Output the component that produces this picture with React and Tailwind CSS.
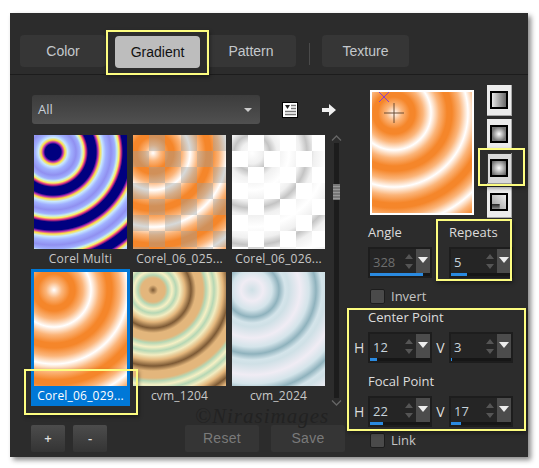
const orangeStops = "#fff_0,#fbb57a_8px,#f5862a_16px,#f5862a_21px,#fbb57a_29px,#fff_37px";

const thumbs = [
  { name: "Corel Multi", fill: "[background:repeating-radial-gradient(circle_at_19px_17px,#000080_8px,#c030b0_10px,#ffe040_12px,#c8e8ff_14.5px,#a0b0ff_18px,#9090f0_23px,#a0b0ff_27px,#c8f0e8_29px,#ffef60_31px,#e03080_33px,#000080_35px,#000080_43px)]" },
  { name: "Corel_06_025...", fill: "[background:conic-gradient(#9aa0a066_25%,transparent_0_50%,#9aa0a066_0_75%,transparent_0)_0_0/32px_32px,repeating-radial-gradient(circle_at_20px_18px,#fff_0,#fbb57a_8px,#f5862a_16px,#f5862a_21px,#fbb57a_29px,#fff_37px)]" },
  { name: "Corel_06_026...", fill: "[background:conic-gradient(#fff_25%,transparent_0_50%,#fff_0_75%,transparent_0)_0_0/32px_32px,repeating-radial-gradient(circle_at_20px_18px,#fff_0,#f0f0f0_11px,#c4c4c4_18px,#f0f0f0_25px,#fff_37px)]" },
  { name: "Corel_06_029...", selected: true, fill: "[background:repeating-radial-gradient(circle_at_20px_18px,#fff_0,#fbb57a_8px,#f5862a_16px,#f5862a_21px,#fbb57a_29px,#fff_37px)]" },
  { name: "cvm_1204", fill: "[background:repeating-radial-gradient(circle_at_20px_18px,#7d5a35_0,#e3b67c_5px,#e3b67c_12px,#b6d7b4_15px,#f6f0c4_19px,#b6d7b4_23px,#f2ecc0_27px,#e3b67c_32px,#7d5a35_38px)]" },
  { name: "cvm_2024", fill: "[background:repeating-radial-gradient(circle_at_20px_18px,#cfe0e6_0,#f0ecf4_11px,#d4e4ea_20px,#8fb2bd_27px,#d4e4ea_33px,#cfe0e6_37px)]" },
];

const shapes = [
  "[background:linear-gradient(to_right,#e8e8e8,#666)]",
  "[background:radial-gradient(closest-side,#fff,#777)]",
  "[background:radial-gradient(circle,#fff,#555)]",
  "[background:linear-gradient(#222,#888)_0_100%/55%_35%_no-repeat,linear-gradient(45deg,#999,#eee)]",
];

function Yellow({ className }) {
  return <div className={`pointer-events-none absolute border-2 border-[#fdfd80] shadow-[1px_2px_4px_#0006] ${className}`} />;
}

function Tab({ label, active, className }) {
  return (
    <div className={`flex h-[32px] items-center justify-center rounded text-[14px] ${active ? "bg-[#bdbdbd] text-[#111]" : "bg-[#363636] text-[#c4c8cc]"} ${className}`}>
      {label}
    </div>
  );
}

function Thumb({ item }) {
  return (
    <div className={`h-[137px] w-[99px] p-[3px] pb-0 ${item.selected ? "bg-[#0078d7]" : ""}`}>
      <div className={`h-[114px] w-[93px] ${item.fill}`} />
      <p className={`flex h-[20px] items-center justify-center text-[12px] tracking-[0.2px] ${item.selected ? "text-white" : "text-[#c8c8c8]"}`}>{item.name}</p>
    </div>
  );
}

function Spin({ value, pct, disabled }) {
  return (
    <div className="flex h-[31px] w-[64px] flex-col border-2 border-[#1d1d1d] bg-[#252525]">
      <div className="flex min-h-0 flex-1">
        <span className={`flex-1 pl-[3px] text-[13px] leading-[26px] ${disabled ? "text-[#6e6e6e]" : "text-[#c8d4dc]"}`}>{value}</span>
        <svg width="14" height="26" viewBox="0 0 14 26" className="shrink-0">
          <path d="M3 10 L7 5 L11 10Z M3 15 L11 15 L7 20Z" fill="#555" />
        </svg>
        <div className="flex w-[14px] shrink-0 justify-center bg-[#4c4c4c] pt-[8px]">
          <svg width="10" height="6" viewBox="0 0 10 6"><path d="M0 0H10L5 6Z" fill="#eee" /></svg>
        </div>
      </div>
      <div className="h-[3px] bg-[#161616]">
        <div className="h-full bg-[#2a8ae0]" style={{ width: `${pct}%` }} />
      </div>
    </div>
  );
}

function Check({ label }) {
  return (
    <div className="flex items-center gap-[6px] text-[13px] text-[#c4c4c4]">
      <div className="h-[15px] w-[15px] rounded-[2px] border border-[#1d1d1d] bg-[#4a4a4a]" />
      {label}
    </div>
  );
}

function SpinRow({ h, v }) {
  return (
    <div className="flex items-center text-[14px] text-[#dcdcdc]">
      <span className="w-[14px]">H</span>
      <Spin {...h} />
      <span className="w-[17px] text-center">V</span>
      <Spin {...v} />
    </div>
  );
}

export default function App() {
  return (
    <div className="h-[468px] w-[539px] overflow-hidden bg-white pl-[10px] pt-[13px] font-['Open_Sans','Noto_Sans',sans-serif]">
      <div className="relative h-[444px] w-[518px] bg-[#2c2c2c] shadow-[3px_3px_5px_#0007]">
        <div className="flex h-[62px] items-start border-b border-[#1c1c1c] pl-[10px] pt-[22px] font-['Liberation_Sans',sans-serif]">
          <Tab label="Color" className="w-[86px]" />
          <Tab label="Gradient" active className="ml-[9px] mt-px h-[30px] w-[85px]" />
          <Tab label="Pattern" className="ml-[6px] w-[90px]" />
          <div className="ml-[13px] mt-[-1px] h-[22px] w-px self-center bg-[#4a4a4a]" />
          <Tab label="Texture" className="ml-[12px] w-[87px]" />
        </div>

        <div className="flex pl-[21px]">
          <div className="w-[315px]">
            <div className="mt-[20px] flex h-[29px] items-center">
              <div className="ml-px flex h-[29px] w-[228px] items-center justify-between rounded-[3px] bg-[linear-gradient(#3c3c3c,#505050)] pl-[6px] pr-[8px] text-[13px] text-[#c8d0d8]">
                All
                <svg width="8" height="4" viewBox="0 0 8 4"><path d="M0 0H8L4 4Z" fill="#ccc" /></svg>
              </div>
              <svg width="16" height="16" viewBox="0 0 16 16" className="ml-[22px]">
                <rect x="0.5" y="0.5" width="15" height="15" fill="#fff" stroke="#000" />
                <path d="M3 3H8L5.5 7Z" fill="#222" />
                <path d="M9 3.5H14M9 6.5H14M3 9.5H14M3 12.5H14" stroke="#777" strokeWidth="1.5" />
              </svg>
              <svg width="14" height="12" viewBox="0 0 14 12" className="ml-[24px]">
                <path d="M0 4H7V0L14 6L7 12V8H0Z" fill="#f0f0f0" />
              </svg>
            </div>

            <div className="mt-[8px] flex">
              <div className="grid w-[297px] grid-cols-3">
                {thumbs.map((item) => <Thumb key={item.name} item={item} />)}
              </div>
              <div className="ml-px flex h-[274px] w-[15px] flex-col items-center justify-between pt-[3px]">
                <svg width="11" height="6" viewBox="0 0 11 6"><path d="M1 5.5L5.5 1L10 5.5" fill="none" stroke="#666" strokeWidth="1.3" /></svg>
                <div className="my-[2px] w-[5px] flex-1 bg-[#1c1c1c] pt-[41px]">
                  <div className="-ml-px h-[16px] w-[7px] bg-[repeating-linear-gradient(#777_0,#777_2px,#999_2px,#999_3px)]" />
                </div>
                <svg width="11" height="6" viewBox="0 0 11 6"><path d="M1 0.5L5.5 5L10 0.5" fill="none" stroke="#666" strokeWidth="1.3" /></svg>
              </div>
            </div>

            <div className="mt-[19px] flex gap-[8px] text-[13px]">
              <div className="flex h-[27px] w-[34px] items-center justify-center rounded-[2px] bg-[linear-gradient(#4c4c4c,#343434)] font-semibold text-[#e0e0e0]">+</div>
              <div className="flex h-[27px] w-[34px] items-center justify-center rounded-[2px] bg-[linear-gradient(#4c4c4c,#343434)] font-semibold text-[#e0e0e0]">-</div>
              <div className="ml-[70px] flex h-[27px] w-[74px] items-center justify-center rounded-[2px] bg-[#353535] font-['Liberation_Sans',sans-serif] text-[14px] tracking-[0.3px] text-[#7a7a7a]">Reset</div>
              <div className="ml-[4px] flex h-[27px] w-[74px] items-center justify-center rounded-[2px] bg-[#353535] font-['Liberation_Sans',sans-serif] text-[14px] tracking-[0.3px] text-[#7a7a7a]">Save</div>
            </div>
          </div>

          <div className="ml-[8px] w-[165px]">
            <div className="mt-[10px] flex h-[134px] pl-[16px]">
              <div className="relative mt-[5px] h-[125px] w-[104px] border-2 border-white [background:repeating-radial-gradient(circle_at_22px_21px,#fff_0,#fbb57a_8px,#f5862a_16px,#f5862a_21px,#fbb57a_29px,#fff_37px)]">
                <svg width="34" height="34" viewBox="0 0 34 34" className="absolute left-[1px] top-[0px]">
                  <path d="M6 0L16 10M16 0L6 10" stroke="#8a3fd0" strokeWidth="1" />
                  <path d="M21 11V31M11 21H31" stroke="#6a4a30" strokeWidth="1" />
                </svg>
              </div>
              <div className="ml-[13px] flex flex-col gap-[3px]">
                {shapes.map((shape, i) => (
                  <div key={shape} className={`flex h-[31px] w-[25px] items-center justify-center border-b border-r ${i === 2 ? "border-[#999] bg-[#d8d8d8] shadow-[inset_1px_1px_0_#333]" : "border-[#aaa] bg-[#ececec]"}`}>
                    <div className={`h-[18px] w-[18px] border-2 border-black ${shape}`} />
                  </div>
                ))}
              </div>
            </div>

            <div className="mt-[4px] flex pl-[14px] text-[13px] text-[#dcdcdc]">
              <div className="w-[81px]">
                <p className="h-[24px] leading-[18px]">Angle</p>
                <Spin value="328" pct={88} disabled />
              </div>
              <div>
                <p className="h-[24px] leading-[18px]">Repeats</p>
                <Spin value="5" pct={27} />
              </div>
            </div>

            <div className="mt-[9px] pl-[16px]">
              <Check label="Invert" />
            </div>

            <p className="mt-px pl-[14px] text-[13px] leading-[18px] text-[#dcdcdc]">Center Point</p>
            <div className="mt-[6px]">
              <SpinRow h={{ value: "12", pct: 12 }} v={{ value: "3", pct: 2 }} />
            </div>
            <p className="mt-[9px] pl-[14px] text-[13px] leading-[18px] text-[#dcdcdc]">Focal Point</p>
            <div className="mt-[6px]">
              <SpinRow h={{ value: "22", pct: 22 }} v={{ value: "17", pct: 17 }} />
            </div>
            <div className="mt-[4px] pl-[16px]">
              <Check label="Link" />
            </div>
          </div>
        </div>

        <p className="pointer-events-none absolute left-[185px] top-[393px] font-['Liberation_Serif',serif] text-[21px] italic leading-[20px] tracking-[1px] text-[#222]">©Nirasimages</p>

        <Yellow className="left-[96px] top-[17px] h-[45px] w-[103px]" />
        <Yellow className="left-[14px] top-[356px] h-[46px] w-[114px]" />
        <Yellow className="left-[468px] top-[135px] h-[38px] w-[47px]" />
        <Yellow className="left-[426px] top-[206px] h-[62px] w-[76px]" />
        <Yellow className="left-[337px] top-[295px] h-[123px] w-[179px]" />
      </div>
    </div>
  );
}
